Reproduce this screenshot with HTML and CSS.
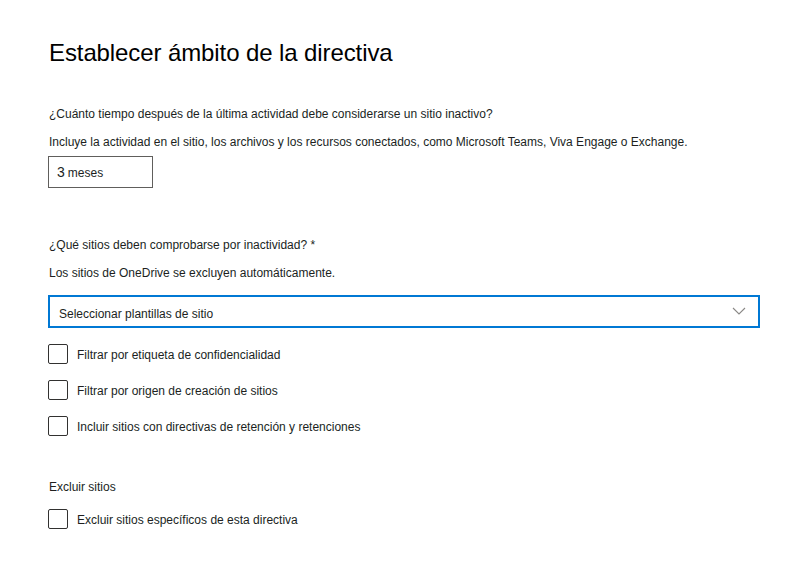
FILE: index.html
```html
<!DOCTYPE html>
<html lang="es">
<head>
<meta charset="utf-8">
<link rel="stylesheet" href="styles.css">
</head>
<body>
<main class="page">
  <h1 class="title">Establecer ámbito de la directiva</h1>

  <p class="q q1">¿Cuánto tiempo después de la última actividad debe considerarse un sitio inactivo?</p>
  <p class="desc">Incluye la actividad en el sitio, los archivos y los recursos conectados, como Microsoft Teams, Viva Engage o Exchange.</p>
  <div class="numbox"><span class="num">3</span><span class="unit">meses</span></div>

  <p class="q q2">¿Qué sitios deben comprobarse por inactividad? *</p>
  <p class="desc">Los sitios de OneDrive se excluyen automáticamente.</p>
  <div class="select">
    <span>Seleccionar plantillas de sitio</span>
    <svg class="chev" width="14" height="8" viewBox="0 0 14 8"><path d="M1 1 L7 7 L13 1" fill="none" stroke="#8a8886" stroke-width="1.1"/></svg>
  </div>

  <div class="checks">
    <label class="check"><span class="box"></span><span class="lbl">Filtrar por etiqueta de confidencialidad</span></label>
    <label class="check"><span class="box"></span><span class="lbl">Filtrar por origen de creación de sitios</span></label>
    <label class="check"><span class="box"></span><span class="lbl">Incluir sitios con directivas de retención y retenciones</span></label>
  </div>

  <p class="section">Excluir sitios</p>
  <label class="check"><span class="box"></span><span class="lbl">Excluir sitios específicos de esta directiva</span></label>
</main>
</body>
</html>
```
FILE: styles.css
```css
* { box-sizing: border-box; }
html, body { margin: 0; padding: 0; background: #fff; }
body {
  font-family: "Liberation Sans", Arial, sans-serif;
  color: #201f1e;
  font-size: 12px;
}
.page {
  padding: 38px 34px 0 48px;
  width: 794px;
}
.title {
  font-weight: 400;
  font-size: 24px;
  line-height: 30px;
  margin: 0 0 0 1px;
  color: #000;
  letter-spacing: -0.1px;
}
p { margin: 0; }
.q { line-height: 18px; padding-left: 1px; }
.q1 { margin-top: 37px; }
.desc { line-height: 18px; margin-top: 10px; padding-left: 1px; }
.numbox {
  margin-top: 5px;
  width: 105px;
  height: 32px;
  border: 1px solid #605e5c;
  display: flex;
  align-items: baseline;
  padding: 7px 0 0 8px;
  gap: 3px;
}
.num { font-size: 14px; }
.unit { font-size: 12px; }
.q2 { margin-top: 48px; }
.select {
  margin-top: 13px;
  width: 712px;
  height: 33px;
  border: 2px solid #0078d4;
  display: flex;
  align-items: center;
  justify-content: space-between;
  padding: 4px 12px 0 9px;
}
.chev { margin-top: -6px; }
.checks {
  margin-top: 16px;
  display: flex;
  flex-direction: column;
  gap: 16px;
}
.check {
  display: flex;
  align-items: center;
  gap: 9px;
  height: 20px;
}
.lbl { padding-top: 2px; }
.box {
  width: 20px;
  height: 20px;
  border: 1px solid #323130;
  border-radius: 2px;
  flex: none;
}
.section { margin-top: 42px; line-height: 18px; padding-left: 1px; margin-bottom: 13px; }
```
